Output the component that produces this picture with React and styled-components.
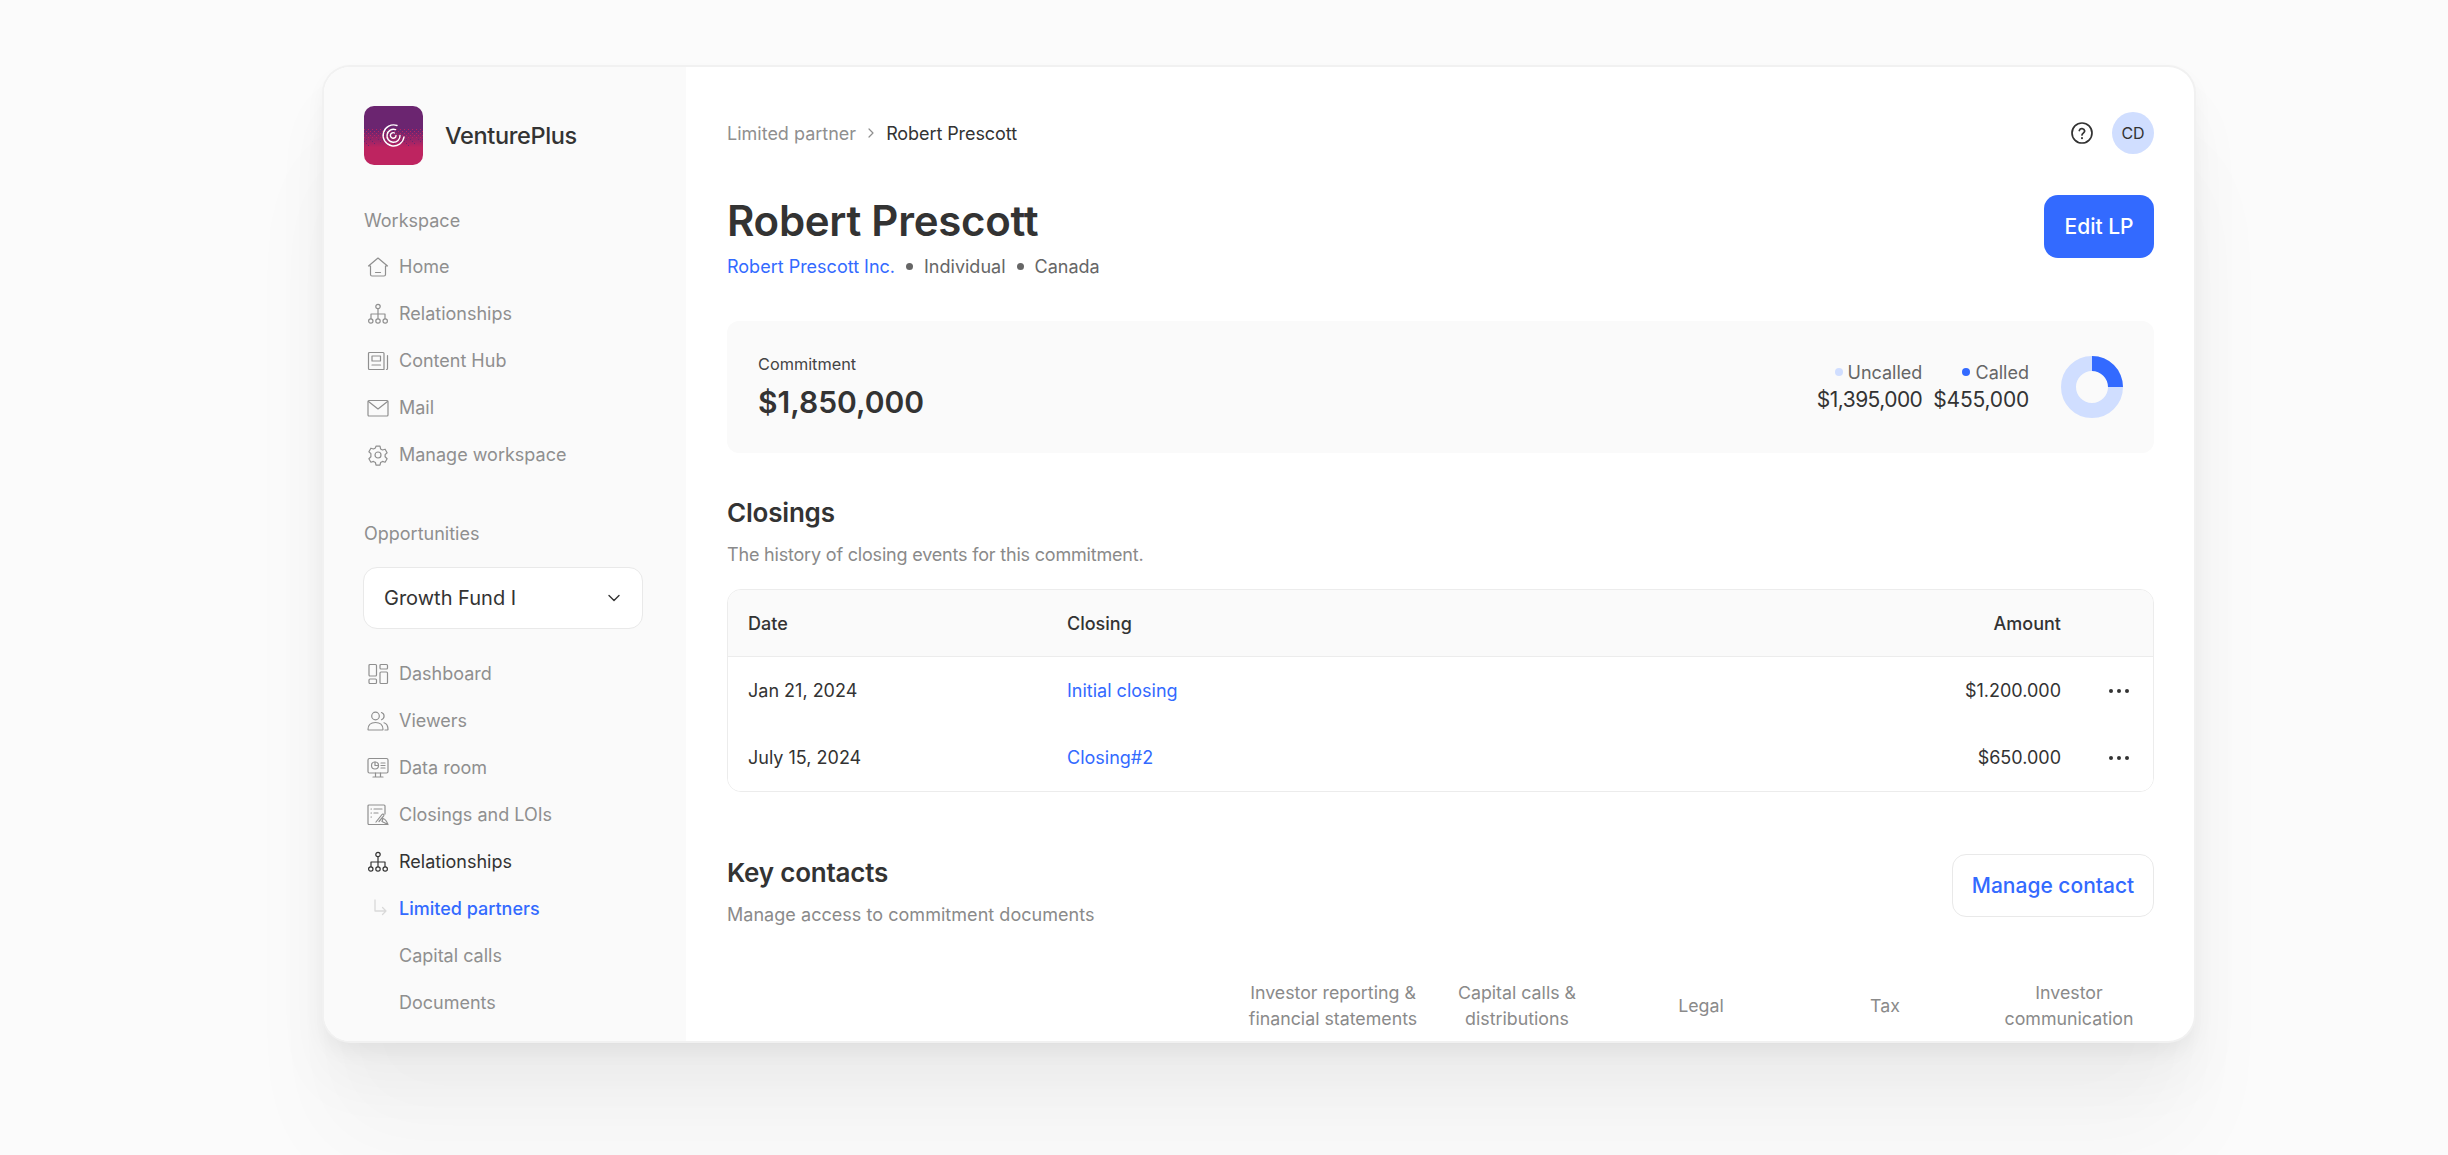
import styled, { createGlobalStyle } from 'styled-components'

const GlobalStyle = createGlobalStyle`
    * { box-sizing: border-box; }
    html, body {
        margin: 0;
        background: #fbfbfb;
    }
    body {
        font-family: Inter, "Liberation Sans", sans-serif;
        color: #333;
        -webkit-font-smoothing: antialiased;
    }
`

const Page = styled.div`
    width: 2448px;
    height: 1155px;
    padding: 67px 254px 0 324px;
    overflow: hidden;
    background: #fbfbfb;
`

const Card = styled.div`
    display: flex;
    width: 1870px;
    height: 974px;
    overflow: hidden;
    background: #fff;
    border-radius: 26px;
    box-shadow: 0 0 0 2px #f1f1f1, 0 10px 20px rgba(0, 0, 0, 0.05), 0 40px 60px rgba(0, 0, 0, 0.04), 0 100px 100px rgba(0, 0, 0, 0.03);
`

const Sidebar = styled.aside`
    flex: 0 0 362px;
    padding: 39px 43px 0 40px;
    background: #fafafa;
`

const Brand = styled.div`
    display: flex;
    align-items: center;
    gap: 22px;
    height: 58px;
    margin-bottom: 32px;
    font-size: 23.500px;
    font-weight: 500;
    letter-spacing: -0.35px;
    color: #333;
`

const SectionLabel = styled.div`
    height: 47px;
    padding-top: 1px;
    line-height: 47px;
    font-size: 18px;
    color: #8f8f8f;
`

const Nav = styled.nav`
    margin-bottom: ${p => p.$gap || 0}px;
`

const NavRow = styled.div`
    display: flex;
    align-items: center;
    gap: 10px;
    height: 47px;
    padding-left: 3px;
    font-size: 18px;
    color: ${p => (p.$active ? '#333' : '#8f8f8f')};
    svg { flex: none; }
`

const SubRow = styled.div`
    display: flex;
    align-items: center;
    height: 47px;
    padding-left: 35px;
    font-size: 18px;
    font-weight: ${p => (p.$active ? 500 : 400)};
    color: ${p => (p.$active ? '#336aff' : '#8f8f8f')};
    position: relative;
`

const SubArrow = styled.svg`
    position: absolute;
    left: 10px;
    top: 14px;
`

const Select = styled.div`
    display: flex;
    align-items: center;
    justify-content: space-between;
    height: 62px;
    margin: 11px 0 21px -1px;
    padding: 0 20px;
    background: #fff;
    border: 1.5px solid #e9e9e9;
    border-radius: 14px;
    font-size: 20px;
    color: #333;
`

const Main = styled.main`
    flex: 1;
    min-width: 0;
    padding: 45px 40px 0 41px;
`

const TopBar = styled.div`
    display: flex;
    align-items: center;
    justify-content: space-between;
    height: 42px;
    margin-bottom: 41px;
`

const Crumbs = styled.div`
    display: flex;
    align-items: center;
    gap: 8px;
    font-size: 18px;
    color: #8f8f8f;
    b {
        font-weight: 400;
        letter-spacing: -0.08px;
        color: #333;
    }
`

const TopActions = styled.div`
    display: flex;
    align-items: center;
    gap: 19px;
`

const Avatar = styled.div`
    display: flex;
    align-items: center;
    justify-content: center;
    width: 42px;
    height: 42px;
    border-radius: 50%;
    background: #d0deff;
    font-size: 16px;
    color: #333;
`

const HeaderRow = styled.div`
    display: flex;
    align-items: flex-start;
    justify-content: space-between;
`

const Title = styled.h1`
    margin: 0;
    height: 52px;
    line-height: 52px;
    font-size: 42px;
    font-weight: 600;
    letter-spacing: -0.28px;
    color: #333;
`

const Meta = styled.div`
    display: flex;
    align-items: center;
    height: 38px;
    font-size: 18px;
    color: #666;
`

const MetaLink = styled.span`
    color: #336aff;
`

const MetaDot = styled.i`
    width: 7px;
    height: 7px;
    margin: 0 11px;
    border-radius: 50%;
    background: #666;
`

const Button = styled.button`
    width: ${p => p.$width}px;
    height: 63px;
    padding: 0;
    border-radius: 14px;
    font-family: inherit;
    font-size: 21px;
    font-weight: 500;
    color: ${p => (p.$outline ? '#336aff' : '#fff')};
    background: ${p => (p.$outline ? '#fff' : '#336aff')};
    border: ${p => (p.$outline ? '1.5px solid #e9e9e9' : 'none')};
`

const Panel = styled.section`
    display: flex;
    align-items: center;
    justify-content: space-between;
    height: 132px;
    margin-top: 36px;
    padding: 0 31px;
    background: #fafafa;
    border-radius: 12px;
`

const PanelLabel = styled.div`
    font-size: 16.300px;
    line-height: 24px;
    color: #444;
`

const PanelValue = styled.div`
    margin-top: 6px;
    font-size: 30px;
    line-height: 40px;
    font-weight: 600;
    color: #333;
`

const Split = styled.div`
    display: flex;
    align-items: center;
`

const SplitItem = styled.div`
    display: flex;
    flex-direction: column;
    align-items: flex-end;
    margin-right: ${p => p.$gap}px;
`

const SplitLabel = styled.div`
    display: flex;
    align-items: center;
    gap: ${p => p.$gap}px;
    height: 26px;
    font-size: 18px;
    color: #666;
    &::before {
        content: '';
        width: 8px;
        height: 8px;
        border-radius: 50%;
        background: ${p => p.$color};
    }
`

const SplitValue = styled.div`
    height: 30px;
    line-height: 30px;
    font-size: 21px;
    letter-spacing: ${p => p.$track}px;
    color: #333;
`

const SectionTitle = styled.h2`
    margin: ${p => p.$top}px 0 0;
    height: 34px;
    line-height: 34px;
    font-size: 26px;
    font-weight: 600;
    letter-spacing: -0.2px;
    color: #333;
`

const SectionText = styled.p`
    margin: 12px 0 0;
    height: 26px;
    line-height: 26px;
    font-size: 18px;
    letter-spacing: ${p => p.$track}px;
    color: #8a8a8a;
`

const Table = styled.div`
    height: 203px;
    margin-top: 21px;
    overflow: hidden;
    border: 1.5px solid #ececec;
    border-radius: 14px;
`

const TableRow = styled.div`
    display: grid;
    grid-template-columns: 319px 1fr 160px 92px;
    align-items: center;
    height: 67px;
    padding-left: 20px;
    font-size: 18px;
    font-weight: ${p => (p.$head ? 500 : 400)};
    color: #333;
    background: ${p => (p.$head ? '#fafafa' : '#fff')};
    border-bottom: ${p => (p.$head ? '1.5px solid #ececec' : 'none')};
`

const Link = styled.span`
    color: #336aff;
`

const Amount = styled.span`
    text-align: right;
`

const More = styled.span`
    display: flex;
    justify-content: flex-end;
    gap: 4px;
    padding-right: 24px;
    i {
        width: 4px;
        height: 4px;
        border-radius: 50%;
        background: #333;
    }
`

const ContactsHead = styled.div`
    display: flex;
    align-items: flex-start;
    justify-content: space-between;
    margin-top: 62px;
`

const Columns = styled.div`
    display: grid;
    grid-template-columns: repeat(5, 184px);
    justify-content: end;
    align-items: center;
    margin: 52px -7px 0 0;
`

const Column = styled.div`
    line-height: 26px;
    font-size: 17.800px;
    text-align: center;
    color: #8a8a8a;
`

// pink dither band of the logo, densest at the bottom
const ditherDots = () => {
    const dots = []
    for (let y = 0; y < 10; y++) {
        for (let x = 0; x < 30; x++) {
            if ((x + y) % 2) continue
            if (y < 5 || (x * 7 + y * 13) % 10 > (y - 5) * 2.4) {
                dots.push(<rect key={`${x}-${y}`} x={x * 2} y={23 + y * 2} width="1" height="1" fill={y < 5 ? '#be2460' : '#6b2570'} />)
            }
        }
    }
    return dots
}

const Logo = () => (
    <svg width="59" height="59" viewBox="0 0 59 59">
        <defs>
            <clipPath id="logoClip"><rect width="59" height="59" rx="10" /></clipPath>
            <linearGradient id="logoBand" x1="0" y1="0" x2="0" y2="1">
                <stop offset="0.42" stopColor="#6b2570" />
                <stop offset="0.7" stopColor="#be2460" />
            </linearGradient>
        </defs>
        <g clipPath="url(#logoClip)">
            <rect width="59" height="59" fill="url(#logoBand)" />
            {ditherDots()}
        </g>
        <g fill="none" stroke="#fff" strokeWidth="1.4" strokeLinecap="round">
            <path d="M33 19.5A10.5 10.5 0 1 0 40 31" />
            <path d="M31.5 23.6A6.5 6.5 0 1 0 36 29.5" />
            <path d="M30.5 27A2.8 2.8 0 1 0 32 29.5" />
        </g>
    </svg>
)

const Icon = ({ children, color = '#8f8f8f' }) => (
    <svg width="22" height="22" viewBox="0 0 22 22" fill="none" stroke={color} strokeWidth="1.2" strokeLinecap="round" strokeLinejoin="round">
        {children}
    </svg>
)

const HomeIcon = () => (
    <Icon>
        <path d="M1.500 10 11 2l9.500 8h-2v8.500a1.500 1.500 0 0 1-1.500 1.500H5a1.500 1.500 0 0 1-1.500-1.500V10z" />
        <path d="M8.500 16.500h5" />
    </Icon>
)

const OrgIcon = ({ color }) => (
    <Icon color={color}>
        <circle cx="11" cy="3.500" r="2.200" />
        <path d="M11 5.700V11M4 15.500V11h14v4.500M11 11v4.500" />
        <circle cx="3.800" cy="18" r="2.200" />
        <circle cx="11" cy="18" r="2.200" />
        <circle cx="18.200" cy="18" r="2.200" />
    </Icon>
)

const NewsIcon = () => (
    <Icon>
        <path d="M17 19.500H2.500a1 1 0 0 1-1-1v-15a1 1 0 0 1 1-1H16a1 1 0 0 1 1 1v16z" />
        <path d="M20.500 5.500v13a1 1 0 0 1-1 1" />
        <rect x="5" y="6" width="8.500" height="5" />
        <path d="M5 15h8.500" />
    </Icon>
)

const MailIcon = () => (
    <Icon>
        <rect x="1" y="3.500" width="20" height="15.500" rx="1" />
        <path d="m1.500 4.500 9.500 7.500 9.500-7.500" />
    </Icon>
)

const GearIcon = () => (
    <Icon>
        <path d="M9 2.200h4l.6 2.700 1.900 1.100 2.600-.8 2 3.500-2 1.900v2.200l2 1.900-2 3.500-2.600-.8-1.900 1.100-.6 2.700H9l-.6-2.700-1.900-1.100-2.600.8-2-3.500 2-1.900V9.600l-2-1.900 2-3.500 2.600.8 1.900-1.100z" />
        <circle cx="11" cy="11" r="3" />
    </Icon>
)

const DashIcon = () => (
    <Icon>
        <rect x="2" y="1.500" width="7.500" height="11.500" rx="1" />
        <rect x="2" y="16" width="7.500" height="4.500" rx="1" />
        <rect x="13" y="1.500" width="7.500" height="4.500" rx="1" />
        <rect x="13" y="9" width="7.500" height="11.500" rx="1" />
    </Icon>
)

const UsersIcon = () => (
    <Icon>
        <circle cx="8.500" cy="6" r="3.800" />
        <path d="M1 19.500c0-4.500 3-7 7.500-7s7.500 2.500 7.500 7a.5.5 0 0 1-.5.5h-14a.5.5 0 0 1-.5-.5z" />
        <path d="M14.500 2.500a3.800 3.800 0 0 1 0 7.200M17 12.800c2.500.8 4 3 4 6.700a.5.5 0 0 1-.5.5H18" />
    </Icon>
)

const RoomIcon = () => (
    <Icon>
        <rect x="1" y="1.500" width="20" height="14.500" rx="1.500" />
        <circle cx="8" cy="8.500" r="3.500" />
        <path d="M8 5v3.500h3.500M14 6h4M14 8.500h4M14 11h4M8.500 16v3.500M13.500 16v3.500M6 20h10" />
    </Icon>
)

const SignIcon = () => (
    <Icon>
        <path d="M10 20.500H2a1 1 0 0 1-1-1V2a1 1 0 0 1 1-1h15a1 1 0 0 1 1 1v8" />
        <path d="M4 5h.5M7 5h8M4 9h.5M7 9h4M4 13h.5" />
        <path d="m9 18 6-7.500c1-1.200 2.500.2 1.700 1.300L12 17.500M21 20.500c-1.500-4-3-5.500-5-6l-1 3 6 3zM8 20.500h13" />
    </Icon>
)

const HelpIcon = () => (
    <svg width="22" height="22" viewBox="0 0 22 22" fill="none" stroke="#333" strokeWidth="1.700" strokeLinecap="round">
        <circle cx="11" cy="11" r="10" />
        <path d="M8.300 8.500A2.800 2.800 0 0 1 13.700 9c0 1.900-2.700 2.200-2.700 4" />
        <path d="M11 16.100v.1" strokeWidth="2" />
    </svg>
)

const Donut = () => (
    <svg width="62" height="62" viewBox="0 0 62 62">
        <circle cx="31" cy="31" r="23.500" fill="none" stroke="#d0deff" strokeWidth="15" />
        <path d="M31 0a31 31 0 0 1 31 31H47A16 16 0 0 0 31 15z" fill="#336aff" />
    </svg>
)

const App = () => {
    return (
        <>
        <GlobalStyle />
        <Page>
            <Card>
                <Sidebar>
                    <Brand>
                        <Logo />
                        VenturePlus
                    </Brand>
                    <SectionLabel>Workspace</SectionLabel>
                    <Nav $gap={31}>
                        <NavRow><HomeIcon />Home</NavRow>
                        <NavRow><OrgIcon />Relationships</NavRow>
                        <NavRow><NewsIcon />Content Hub</NavRow>
                        <NavRow><MailIcon />Mail</NavRow>
                        <NavRow><GearIcon />Manage workspace</NavRow>
                    </Nav>
                    <SectionLabel>Opportunities</SectionLabel>
                    <Select>
                        Growth Fund I
                        <svg width="16" height="16" viewBox="0 0 16 16" fill="none" stroke="#333" strokeWidth="1.400" strokeLinecap="round" strokeLinejoin="round">
                            <path d="m3 5.500 5 5 5-5" />
                        </svg>
                    </Select>
                    <Nav>
                        <NavRow><DashIcon />Dashboard</NavRow>
                        <NavRow><UsersIcon />Viewers</NavRow>
                        <NavRow><RoomIcon />Data room</NavRow>
                        <NavRow><SignIcon />Closings and LOIs</NavRow>
                        <NavRow $active><OrgIcon color="#333" />Relationships</NavRow>
                        <SubRow $active>
                            <SubArrow width="14" height="18" viewBox="0 0 14 18" fill="none" stroke="#d9d9d9" strokeWidth="1.300" strokeLinecap="round" strokeLinejoin="round">
                                <path d="M1 1v11h11M8.500 8.500 12 12l-3.500 3.500" />
                            </SubArrow>
                            Limited partners
                        </SubRow>
                        <SubRow>Capital calls</SubRow>
                        <SubRow>Documents</SubRow>
                    </Nav>
                </Sidebar>
                <Main>
                    <TopBar>
                        <Crumbs>
                            Limited partner
                            <svg width="14" height="14" viewBox="0 0 14 14" fill="none" stroke="#8f8f8f" strokeWidth="1.200" strokeLinecap="round" strokeLinejoin="round">
                                <path d="m5 3 4 4-4 4" />
                            </svg>
                            <b>Robert Prescott</b>
                        </Crumbs>
                        <TopActions>
                            <HelpIcon />
                            <Avatar>CD</Avatar>
                        </TopActions>
                    </TopBar>
                    <HeaderRow>
                        <div>
                            <Title>Robert Prescott</Title>
                            <Meta>
                                <MetaLink>Robert Prescott Inc.</MetaLink>
                                <MetaDot />
                                Individual
                                <MetaDot />
                                Canada
                            </Meta>
                        </div>
                        <Button $width={110}>Edit LP</Button>
                    </HeaderRow>
                    <Panel>
                        <div>
                            <PanelLabel>Commitment</PanelLabel>
                            <PanelValue>$1,850,000</PanelValue>
                        </div>
                        <Split>
                            <SplitItem $gap={11}>
                                <SplitLabel $color="#d0deff" $gap={4}>Uncalled</SplitLabel>
                                <SplitValue $track={-0.55}>$1,395,000</SplitValue>
                            </SplitItem>
                            <SplitItem $gap={32}>
                                <SplitLabel $color="#336aff" $gap={6}>Called</SplitLabel>
                                <SplitValue $track={-0.2}>$455,000</SplitValue>
                            </SplitItem>
                            <Donut />
                        </Split>
                    </Panel>
                    <SectionTitle $top={43}>Closings</SectionTitle>
                    <SectionText $track={-0.19}>The history of closing events for this commitment.</SectionText>
                    <Table>
                        <TableRow $head>
                            <span>Date</span>
                            <span>Closing</span>
                            <Amount>Amount</Amount>
                            <span />
                        </TableRow>
                        <TableRow>
                            <span>Jan 21, 2024</span>
                            <Link>Initial closing</Link>
                            <Amount>$1.200.000</Amount>
                            <More><i /><i /><i /></More>
                        </TableRow>
                        <TableRow>
                            <span>July 15, 2024</span>
                            <Link>Closing#2</Link>
                            <Amount>$650.000</Amount>
                            <More><i /><i /><i /></More>
                        </TableRow>
                    </Table>
                    <ContactsHead>
                        <div>
                            <SectionTitle $top={2}>Key contacts</SectionTitle>
                            <SectionText $track={0.04}>Manage access to commitment documents</SectionText>
                        </div>
                        <Button $outline $width={202}>Manage contact</Button>
                    </ContactsHead>
                    <Columns>
                        <Column>Investor reporting &<br />financial statements</Column>
                        <Column>Capital calls &<br />distributions</Column>
                        <Column>Legal</Column>
                        <Column>Tax</Column>
                        <Column>Investor<br />communication</Column>
                    </Columns>
                </Main>
            </Card>
        </Page>
        </>
    )
}

export default App
